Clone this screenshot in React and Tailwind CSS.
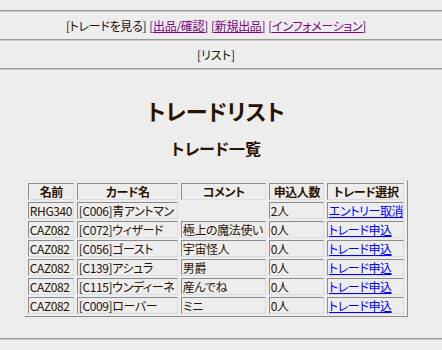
import React from 'react';

const rows = [
  { name: 'RHG340', card: '[C006]青アントマン', comment: '', count: '2人', action: 'エントリー取消' },
  { name: 'CAZ082', card: '[C072]ウィザード', comment: '極上の魔法使い', count: '0人', action: 'トレード申込' },
  { name: 'CAZ082', card: '[C056]ゴースト', comment: '宇宙怪人', count: '0人', action: 'トレード申込' },
  { name: 'CAZ082', card: '[C139]アシュラ', comment: '男爵', count: '0人', action: 'トレード申込' },
  { name: 'CAZ082', card: '[C115]ウンディーネ', comment: '産んでね', count: '0人', action: 'トレード申込' },
  { name: 'CAZ082', card: '[C009]ローバー', comment: 'ミニ', count: '0人', action: 'トレード申込' },
];

const cell = 'h-[17px] p-0 pl-[1px] border border-t-[#8a8a8a] border-l-[#8a8a8a] border-b-[#dcdcdc] border-r-[#dcdcdc] whitespace-nowrap overflow-hidden leading-[15px] tracking-[-0.4px]';

const Rule = () => <div className="h-[2px] border-t border-t-[#9a9a9a] border-b border-b-[#c8c8c8]" />;

export default function App() {
  return (
    <div
      className="min-h-[350px] bg-[#ededed] text-[#2a1200] text-[12px] [font-family:'Noto_Sans_CJK_JP','Noto_Sans',sans-serif] [font-feature-settings:'palt']"
    >
      <div className="h-[10px]" />
      <Rule />
      <div className="w-[432px] h-[27px] flex items-center justify-center gap-[3px] tracking-[-0.3px]">
        <span>[トレードを見る]</span>
        <a href="#" className="text-[#800080] underline">[出品/確認]</a>
        <a href="#" className="text-[#800080] underline">[新規出品]</a>
        <a href="#" className="text-[#800080] underline">[インフォメーション]</a>
      </div>
      <Rule />
      <div className="w-[432px] h-[27px] flex items-center justify-center">
        <span>[リスト]</span>
      </div>
      <Rule />

      <div className="w-[432px] flex flex-col items-center">
        <h1 className="mt-[27px] h-[26px] leading-[26px] text-[22px] font-bold">トレードリスト</h1>
        <h2 className="mt-[15px] h-[20px] leading-[20px] text-[16px] font-bold">トレード一覧</h2>

        <table className="mt-[22px] table-fixed border-separate border-spacing-x-[3px] border-spacing-y-[2px] border border-t-[#e8e8e8] border-l-[#e8e8e8] border-b-[#8a8a8a] border-r-[#8a8a8a]">
          <colgroup>
            <col className="w-[46px]" />
            <col className="w-[101px]" />
            <col className="w-[85px]" />
            <col className="w-[55px]" />
            <col className="w-[77px]" />
          </colgroup>
          <thead>
            <tr>
              {['名前', 'カード名', 'コメント', '申込人数', 'トレード選択'].map(h => (
                <th key={h} className={`${cell} text-center font-bold`}>{h}</th>
              ))}
            </tr>
          </thead>
          <tbody>
            {rows.map((r, i) => (
              <tr key={i}>
                <td className={cell}>{r.name}</td>
                <td className={cell}>{r.card}</td>
                {r.comment ? <td className={cell}>{r.comment}</td> : <td className="h-[17px] p-0" />}
                <td className={cell}>{r.count}</td>
                <td className={cell}>
                  <a href="#" className="text-[#0000ff] underline">{r.action}</a>
                </td>
              </tr>
            ))}
          </tbody>
        </table>
      </div>

      <div className="h-[21px]" />
      <Rule />
    </div>
  );
}
